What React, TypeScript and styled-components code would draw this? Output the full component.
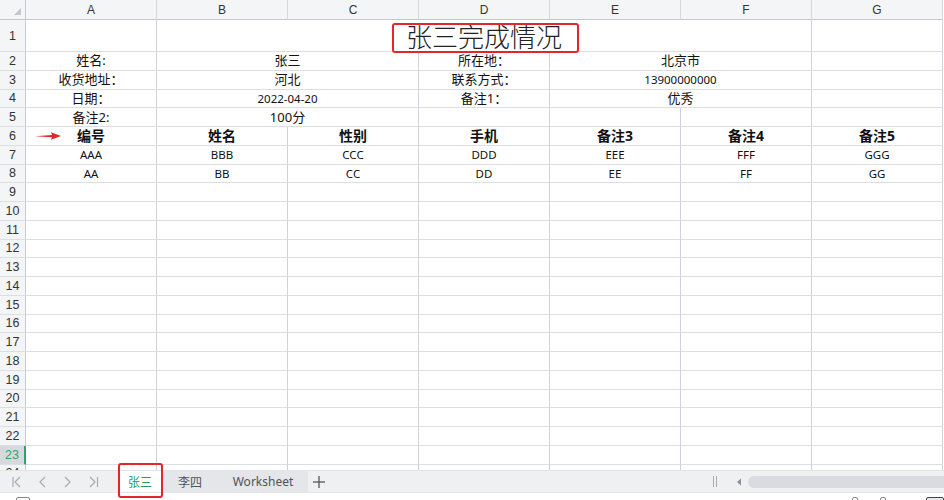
import React from "react";
import styled, { createGlobalStyle, css } from "styled-components";

const Global = createGlobalStyle`
  html, body { margin: 0; padding: 0; background: #fff; }
  body { width: 944px; height: 500px; overflow: hidden; font-family: "Noto Sans", "Noto Sans CJK SC", sans-serif; }
`;

const Page = styled.div`
  position: relative;
  width: 944px;
  height: 500px;
  overflow: hidden;
  display: flex;
  flex-direction: column;
`;

const Sheet = styled.div`
  display: grid;
  grid-template-columns: 26px repeat(7, 131px);
  grid-template-rows: 20px 32px repeat(23, 18.75px);
  height: 470px;
  overflow: hidden;
  flex: none;
`;

const HeaderBase = css`
  background: #f4f5f6;
  color: #333;
  font-family: "Liberation Sans", "Noto Sans", sans-serif;
  font-size: 12px;
  display: flex;
  align-items: center;
  justify-content: center;
  box-sizing: border-box;
`;

const Corner = styled.div`
  ${HeaderBase};
  position: relative;
  border-right: 1px solid #c9cbd2;
  border-bottom: 1px solid #c4c6cc;
  &::after {
    content: "";
    position: absolute;
    right: 4px;
    bottom: 4px;
    width: 0;
    height: 0;
    border-left: 7px solid transparent;
    border-bottom: 7px solid #c3c6cb;
  }
`;

const ColHeader = styled.div`
  ${HeaderBase};
  border-right: 1px solid #d6d8dd;
  border-bottom: 1px solid #c4c6cc;
  padding-top: 1px;
`;

const RowHeader = styled.div<{ $active?: boolean }>`
  ${HeaderBase};
  font-size: 12.5px;
  border-right: 1px solid #c9cbd2;
  border-bottom: 1px solid #dcdee3;
  ${(p) =>
    p.$active &&
    css`
      background: #d6d9de;
      color: #2ba56c;
      border-right: 2px solid #2ba56c;
    `}
`;

const Cell = styled.div<{ $span?: number; $bold?: boolean; $small?: boolean; $title?: boolean }>`
  grid-column: span ${(p) => p.$span ?? 1};
  box-sizing: border-box;
  border-right: 1px solid #cfd1de;
  border-bottom: 1px solid #dcdee5;
  display: flex;
  align-items: center;
  justify-content: center;
  white-space: nowrap;
  overflow: ${(p) => (p.$title ? "visible" : "hidden")};
  color: #111;
  font-family: "Noto Sans", "Noto Sans CJK SC", sans-serif;
  font-size: ${(p) => (p.$title ? "26px" : p.$bold ? "14px" : p.$small ? "11.5px" : "13px")};
  font-weight: ${(p) => (p.$bold ? 700 : 400)};
  line-height: 1;
  position: relative;
  ${(p) =>
    p.$title &&
    css`
      color: #222;
      padding-top: 1px;
      font-weight: 300;
      font-family: "Noto Sans CJK SC", sans-serif;
    `}
`;

const Arrow = styled.svg`
  position: absolute;
  left: 8px;
  top: 50%;
  transform: translateY(-50%);
`;

const TabBar = styled.div`
  height: 22px;
  flex: none;
  display: flex;
  align-items: stretch;
  background: #eef0f2;
  border-top: 1px solid #e2e4e8;
  box-sizing: border-box;
`;

const NavGroup = styled.div`
  width: 118px;
  display: flex;
  align-items: center;
  padding-left: 12px;
  gap: 13px;
  box-sizing: border-box;
`;

const NavIcon = styled.svg`
  flex: none;
`;

const Tabs = styled.div`
  display: flex;
  align-items: stretch;
  background: #e4e6ea;
`;

const Tab = styled.div<{ $active?: boolean; $w: number }>`
  width: ${(p) => p.$w}px;
  display: flex;
  align-items: center;
  justify-content: center;
  font-family: "Noto Sans", "Noto Sans CJK SC", sans-serif;
  font-size: 12px;
  color: ${(p) => (p.$active ? "#1f9d5c" : "#505357")};
  background: ${(p) => (p.$active ? "#fff" : "transparent")};
`;

const AddTab = styled.div`
  width: 22px;
  display: flex;
  align-items: center;
  justify-content: center;
`;

const Spacer = styled.div`
  flex: 1;
`;

const Splitter = styled.div`
  width: 30px;
  display: flex;
  align-items: center;
  justify-content: center;
  gap: 2px;
`;

const SplitLine = styled.span`
  width: 1px;
  height: 11px;
  background: #a9acb1;
`;

const ScrollLeft = styled.div`
  width: 18px;
  display: flex;
  align-items: center;
  justify-content: center;
`;

const Track = styled.div`
  width: 196px;
  display: flex;
  align-items: center;
`;

const Thumb = styled.div`
  width: 100%;
  height: 12px;
  border-radius: 6px 0 0 6px;
  background: #d9dbe0;
`;

const StatusBar = styled.div`
  flex: 1;
  background: #fff;
  border-top: 1px solid #e3e5e8;
  position: relative;
`;

const StatusIcon = styled.div<{ $x: number; $w: number; $dark?: boolean }>`
  position: absolute;
  left: ${(p) => p.$x}px;
  top: 4px;
  width: ${(p) => p.$w}px;
  height: 8px;
  box-sizing: border-box;
  border: 1.5px solid ${(p) => (p.$dark ? "#444" : "#888")};
  border-radius: 2px;
  background: ${(p) => (p.$dark ? "#e8e9eb" : "transparent")};
`;

const RedBox = styled.div<{ $x: number; $y: number; $w: number; $h: number }>`
  position: absolute;
  left: ${(p) => p.$x}px;
  top: ${(p) => p.$y}px;
  width: ${(p) => p.$w}px;
  height: ${(p) => p.$h}px;
  box-sizing: border-box;
  border: 2px solid #e3262b;
  border-radius: 3px;
  pointer-events: none;
`;

type CellDef = { text?: string; span?: number; bold?: boolean; small?: boolean; title?: boolean; arrow?: boolean };

const cols = ["A", "B", "C", "D", "E", "F", "G"];

const data: Record<number, CellDef[]> = {
  1: [{}, { text: "张三完成情况", span: 5, title: true }, {}],
  2: [{ text: "姓名:" }, { text: "张三", span: 2 }, { text: "所在地：" }, { text: "北京市", span: 2 }, {}],
  3: [{ text: "收货地址：" }, { text: "河北", span: 2 }, { text: "联系方式：" }, { text: "13900000000", span: 2, small: true }, {}],
  4: [{ text: "日期：" }, { text: "2022-04-20", span: 2, small: true }, { text: "备注1：" }, { text: "优秀", span: 2 }, {}],
  5: [{ text: "备注2:" }, { text: "100分", span: 2 }, {}, {}, {}, {}],
  6: [
    { text: "编号", bold: true, arrow: true },
    { text: "姓名", bold: true },
    { text: "性别", bold: true },
    { text: "手机", bold: true },
    { text: "备注3", bold: true },
    { text: "备注4", bold: true },
    { text: "备注5", bold: true },
  ],
  7: ["AAA", "BBB", "CCC", "DDD", "EEE", "FFF", "GGG"].map((t) => ({ text: t, small: true })),
  8: ["AA", "BB", "CC", "DD", "EE", "FF", "GG"].map((t) => ({ text: t, small: true })),
};

const Chevron = ({ dir, bar }: { dir: "l" | "r"; bar?: boolean }) => (
  <NavIcon width="12" height="14" viewBox="0 0 12 14">
    <g fill="none" stroke="#a8abb0" strokeWidth="1.2">
      {dir === "l" ? <polyline points="8,2 3,7 8,12" /> : <polyline points="3,2 8,7 3,12" />}
      {bar && (dir === "l" ? <line x1="1" y1="2" x2="1" y2="12" /> : <line x1="10.5" y1="2" x2="10.5" y2="12" />)}
    </g>
  </NavIcon>
);

export default function App() {
  const rows: React.ReactNode[] = [];
  for (let r = 1; r <= 24; r++) {
    rows.push(
      <RowHeader key={`h${r}`} $active={r === 23}>
        {r}
      </RowHeader>
    );
    const defs = data[r] ?? cols.map(() => ({}));
    defs.forEach((d, i) =>
      rows.push(
        <Cell key={`c${r}-${i}`} $span={d.span} $bold={d.bold} $small={d.small} $title={d.title}>
          {d.arrow && (
            <Arrow width="28" height="10" viewBox="0 0 28 10">
              <path d="M1 5.3 L18 4 L17 1.2 L27 5 L17 8.8 L18 6.2 Z" fill="#e3262b" />
            </Arrow>
          )}
          {d.text}
        </Cell>
      )
    );
  }

  return (
    <Page>
      <Global />
      <Sheet>
        <Corner />
        {cols.map((c) => (
          <ColHeader key={c}>{c}</ColHeader>
        ))}
        {rows}
      </Sheet>
      <TabBar>
        <NavGroup>
          <Chevron dir="l" bar />
          <Chevron dir="l" />
          <Chevron dir="r" />
          <Chevron dir="r" bar />
        </NavGroup>
        <Tabs>
          <Tab $active $w={44}>
            张三
          </Tab>
          <Tab $w={56}>李四</Tab>
          <Tab $w={90}>Worksheet</Tab>
        </Tabs>
        <AddTab>
          <svg width="14" height="14" viewBox="0 0 14 14">
            <g stroke="#555" strokeWidth="1.3">
              <line x1="7" y1="1" x2="7" y2="13" />
              <line x1="1" y1="7" x2="13" y2="7" />
            </g>
          </svg>
        </AddTab>
        <Spacer />
        <Splitter>
          <SplitLine />
          <SplitLine />
        </Splitter>
        <ScrollLeft>
          <svg width="6" height="8" viewBox="0 0 6 8">
            <polygon points="5,0.5 1,4 5,7.5" fill="#8d9095" />
          </svg>
        </ScrollLeft>
        <Track>
          <Thumb />
        </Track>
      </TabBar>
      <StatusBar>
        <StatusIcon $x={16} $w={14} />
        <StatusIcon $x={852} $w={6} />
        <StatusIcon $x={880} $w={6} />
        <StatusIcon $x={926} $w={18} $dark />
      </StatusBar>
      <RedBox $x={392} $y={23} $w={187} $h={30} />
      <RedBox $x={118} $y={463} $w={45} $h={35} />
    </Page>
  );
}
